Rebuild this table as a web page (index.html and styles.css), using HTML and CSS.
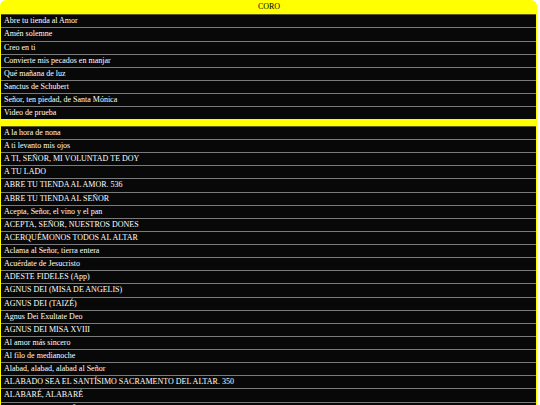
FILE: index.html
```html
<!DOCTYPE html>
<html lang="es">
<head>
<meta charset="utf-8">
<title>CORO</title>
<link rel="stylesheet" href="styles.css">
</head>
<body>
<div class="panel">
  <div class="panel-header">CORO</div>
  <ul class="song-list">
    <li class="song">Abre tu tienda al Amor</li>
    <li class="song">Amén solemne</li>
    <li class="song">Creo en ti</li>
    <li class="song">Convierte mis pecados en manjar</li>
    <li class="song">Qué mañana de luz</li>
    <li class="song">Sanctus de Schubert</li>
    <li class="song">Señor, ten piedad, de Santa Mónica</li>
    <li class="song">Video de prueba</li>
  </ul>
  <ul class="song-list second">
    <li class="song">A la hora de nona</li>
    <li class="song">A ti levanto mis ojos</li>
    <li class="song">A TI, SEÑOR, MI VOLUNTAD TE DOY</li>
    <li class="song">A TU LADO</li>
    <li class="song">ABRE TU TIENDA AL AMOR. 536</li>
    <li class="song">ABRE TU TIENDA AL SEÑOR</li>
    <li class="song">Acepta, Señor, el vino y el pan</li>
    <li class="song">ACEPTA, SEÑOR, NUESTROS DONES</li>
    <li class="song">ACERQUÉMONOS TODOS AL ALTAR</li>
    <li class="song">Aclama al Señor, tierra entera</li>
    <li class="song">Acuérdate de Jesucristo</li>
    <li class="song">ADESTE FIDELES (App)</li>
    <li class="song">AGNUS DEI (MISA DE ANGELIS)</li>
    <li class="song">AGNUS DEI (TAIZÉ)</li>
    <li class="song">Agnus Dei Exultate Deo</li>
    <li class="song">AGNUS DEI MISA XVIII</li>
    <li class="song">Al amor más sincero</li>
    <li class="song">Al filo de medianoche</li>
    <li class="song">Alabad, alabad, alabad al Señor</li>
    <li class="song">ALABADO SEA EL SANTÍSIMO SACRAMENTO DEL ALTAR. 350</li>
    <li class="song">ALABARÉ, ALABARÉ</li>
    <li class="song">ALABEMOS AL SEÑOR</li>
  </ul>
</div>
</body>
</html>
```
FILE: styles.css
```css
html, body {
  margin: 0;
  padding: 0;
  background: #ffffff;
  overflow: hidden;
}

body {
  font-family: "Liberation Serif", "Times New Roman", serif;
  font-size: 8px;
}

.panel {
  width: 537px;
  box-sizing: border-box;
  background: #ffff00;
  padding: 0 1px;
  border-radius: 6px 6px 0 0;
}

.panel-header {
  height: 14.3px;
  line-height: 14.3px;
  text-align: center;
  color: #000;
  padding-left: 1px;
}

.song-list {
  list-style: none;
  margin: 0;
  padding: 0;
}

.song-list.second {
  margin-top: 6.7px;
}

.song {
  box-sizing: border-box;
  height: 13.125px;
  line-height: 12px;
  padding-left: 3px;
  background: #080808;
  color: #ffffff;
  border-top: 1px solid #7a7a7a;
  white-space: nowrap;
}

.song-list .song:first-child {
  border-top-color: #5a5a1e;
}
```
